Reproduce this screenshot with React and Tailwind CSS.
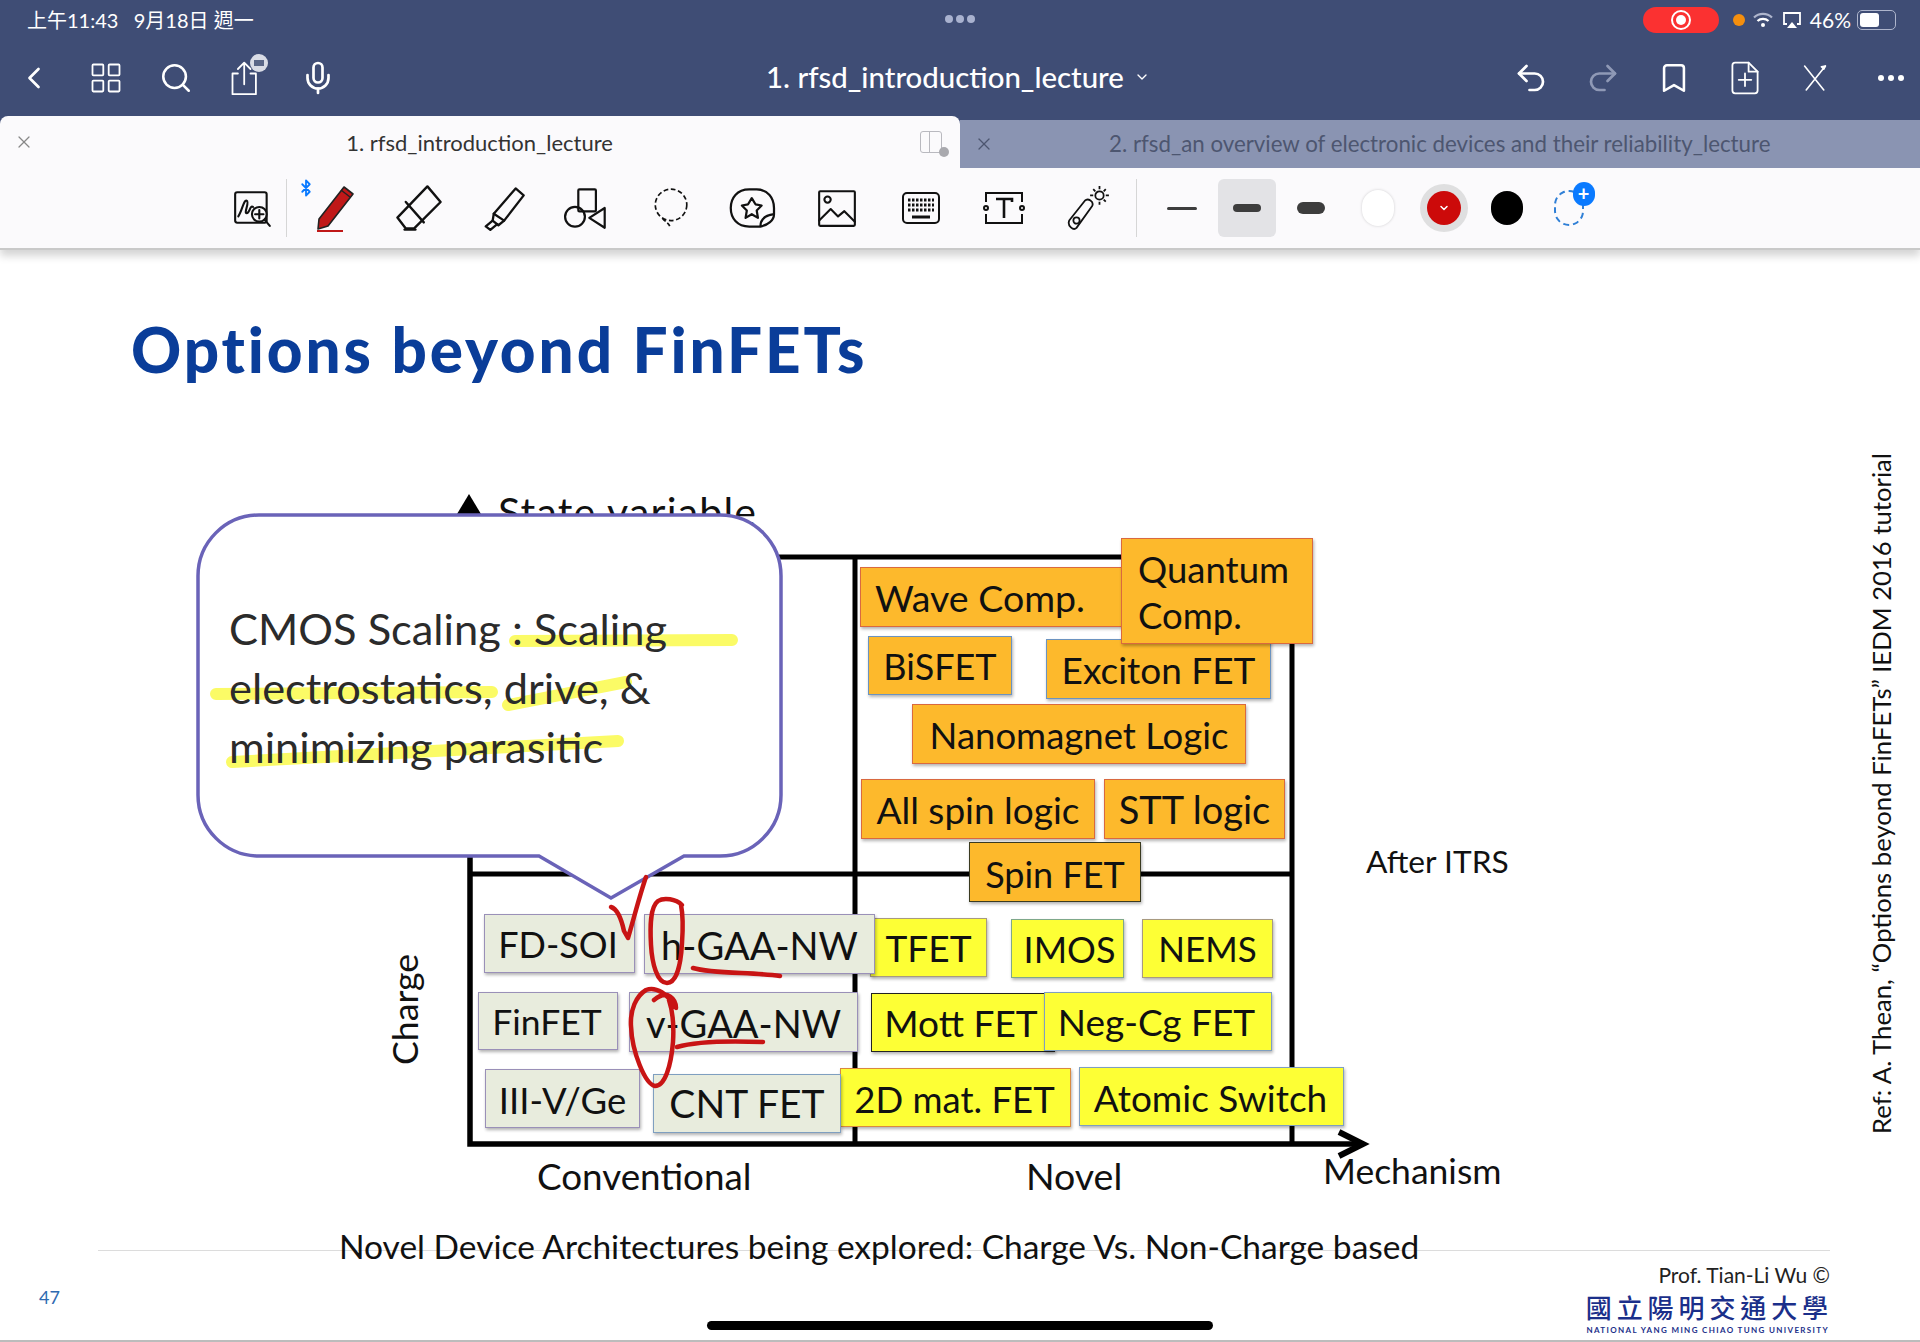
import { Bluetooth, ChevronDown, ChevronLeft, Search, Bookmark, Undo2, Redo2, Mic, X } from "lucide-react";

const SANS = "font-['Lato','Noto_Sans_CJK_TC',sans-serif]";

// boxes on the chart, page x / page y minus the canvas top (482)
const nodes = [
  ["Wave Comp.", "left-[860px] top-[87px] w-[270px] h-[60px] pr-[30px] pt-[3px] bg-[#fdb92c] border-[#d9693f] text-[37.5px]"],
  ["BiSFET", "left-[868px] top-[156px] w-[144px] h-[59px] bg-[#fdb92c] border-[#6b93c0] text-[36px]"],
  ["Exciton FET", "left-[1046px] top-[159px] w-[225px] h-[60px] pt-[1px] bg-[#fdb92c] border-[#6b93c0] text-[37px]"],
  ["Quantum Comp.", "left-[1121px] top-[58px] w-[192px] h-[106px] pl-[16px] pt-[2px] justify-start text-left leading-[46px] bg-[#fdb92c] border-[#d9693f] text-[36.5px]"],
  ["Nanomagnet Logic", "left-[912px] top-[224px] w-[334px] h-[60px] pt-[3px] bg-[#fdb92c] border-[#d9693f] text-[36.5px]"],
  ["All spin logic", "left-[861px] top-[299px] w-[234px] h-[60px] pt-[1px] bg-[#fdb92c] border-[#d9693f] text-[37px]"],
  ["STT logic", "left-[1104px] top-[299px] w-[181px] h-[60px] pt-[1px] bg-[#fdb92c] border-[#d9693f] text-[38px]"],
  ["Spin FET", "left-[969px] top-[362px] w-[172px] h-[60px] pt-[3px] bg-[#fdb92c] border-[#3a3a20] text-[36px]"],
  ["TFET", "left-[870px] top-[438px] w-[117px] h-[59px] bg-[#fdff35] border-[#a89a80] text-[37px]"],
  ["IMOS", "left-[1011px] top-[439px] w-[113px] h-[59px] pl-[4px] bg-[#fdff35] border-[#7fa88a] text-[36px]"],
  ["NEMS", "left-[1142px] top-[439px] w-[131px] h-[59px] bg-[#fdff35] border-[#a89a80] text-[35px]"],
  ["Mott FET", "left-[871px] top-[513px] w-[184px] h-[59px] pr-[4px] bg-[#fdff35] border-[#222222] text-[37px]"],
  ["Neg-Cg FET", "left-[1044px] top-[512px] w-[228px] h-[59px] pr-[3px] bg-[#fdff35] border-[#7f9fc0] text-[37px]"],
  ["2D mat. FET", "left-[840px] top-[588px] w-[231px] h-[59px] pt-[3px] pr-[2px] bg-[#fdff35] border-[#d9893f] text-[36.5px]"],
  ["Atomic Switch", "left-[1079px] top-[587px] w-[265px] h-[59px] pt-[3px] pr-[2px] bg-[#fdff35] border-[#7f9fc0] text-[37px]"],
  ["FD-SOI", "left-[484px] top-[434px] w-[151px] h-[59px] pr-[3px] bg-[#e8ecdd] border-[#9a90b8] text-[36px]"],
  ["h-GAA-NW", "left-[644px] top-[434px] w-[231px] h-[60px] pt-[2px] bg-[#e8ecdd] border-[#9a90b8] text-[38px]"],
  ["FinFET", "left-[478px] top-[512px] w-[140px] h-[58px] pt-[2px] pr-[2px] bg-[#e8ecdd] border-[#9a90b8] text-[35.5px]"],
  ["v-GAA-NW", "left-[629px] top-[512px] w-[229px] h-[60px] pt-[3px] bg-[#e8ecdd] border-[#9a90b8] text-[38px]"],
  ["III-V/Ge", "left-[485px] top-[589px] w-[155px] h-[59px] pt-[3px] bg-[#e8ecdd] border-[#9a90b8] text-[36.5px]"],
  ["CNT FET", "left-[653px] top-[594px] w-[188px] h-[59px] bg-[#e8ecdd] border-[#7f9fc0] text-[39px]"],
];

function Line({ className, children }) {
  return <svg viewBox="0 0 40 40" fill="none" stroke="currentColor" strokeWidth="2" strokeLinecap="round" strokeLinejoin="round" className={className}>{children}</svg>;
}

function StatusBar() {
  return (
    <div className="relative flex items-center h-[40px] pl-[27px] pr-[24px] text-white">
      <span className="text-[20px] whitespace-pre">上午11:43   9月18日 週一</span>
      <div className="absolute left-[945px] top-[15px] flex gap-[3px]">
        <i className="w-[8px] h-[8px] rounded-full bg-[#a9b2cf]" />
        <i className="w-[8px] h-[8px] rounded-full bg-[#a9b2cf]" />
        <i className="w-[8px] h-[8px] rounded-full bg-[#a9b2cf]" />
      </div>
      <div className="ml-auto flex items-center">
        <div className="w-[76px] h-[26px] rounded-full bg-[#fb3131] flex items-center justify-center mr-[14px]">
          <div className="w-[20px] h-[20px] rounded-full border-[2px] border-white flex items-center justify-center">
            <div className="w-[10px] h-[10px] rounded-full bg-white" />
          </div>
        </div>
        <div className="w-[12px] h-[12px] rounded-full bg-[#f58f0e] mr-[8px]" />
        <svg viewBox="0 0 20 16" className="w-[20px] h-[16px] mr-[9px]" fill="none" stroke="white" strokeWidth="2.2">
          <path d="M1 5.5a13 13 0 0 1 18 0" stroke="#aeb5cc" />
          <path d="M4.5 9a8 8 0 0 1 11 0" />
          <circle cx="10" cy="13" r="2" fill="white" stroke="none" />
        </svg>
        <svg viewBox="0 0 20 18" className="w-[20px] h-[18px] mr-[8px]" fill="none" stroke="white" strokeWidth="1.8">
          <path d="M5 13H2V2h16v11h-3" />
          <path d="M5 17l5-6 5 6z" fill="white" stroke="none" />
        </svg>
        <span className="text-[21px] mr-[6px]">46%</span>
        <div className="w-[39px] h-[20px] rounded-[5px] border border-[#aeb5cc] p-[2px]">
          <div className="w-[19px] h-full rounded-[3px] bg-white" />
        </div>
      </div>
    </div>
  );
}

function NavBar() {
  return (
    <div className="relative flex items-center h-[76px] text-white">
      <ChevronLeft className="ml-[16px] w-[36px] h-[36px]" strokeWidth={1.8} />
      <Line className="ml-[36px] w-[36px] h-[36px]">
        <rect x="5" y="5" width="12" height="12" rx="1" /><rect x="23" y="5" width="12" height="12" rx="1" />
        <rect x="5" y="23" width="12" height="12" rx="1" /><rect x="23" y="23" width="12" height="12" rx="1" />
      </Line>
      <Search className="ml-[35px] w-[34px] h-[34px]" strokeWidth={1.8} />
      <div className="relative ml-[35px] w-[36px] h-[40px]">
        <Line className="w-[36px] h-[40px]">
          <path d="M11 15H5v23h26V15h-6" /><path d="M18 27V3M11 10l7-7 7 7" />
        </Line>
        <div className="absolute left-[22px] -top-[4px] w-[18px] h-[18px] rounded-full bg-[#d9dce6] flex items-center justify-center">
          <div className="w-[10px] h-[6px] bg-[#5a6687]" />
        </div>
      </div>
      <Mic className="ml-[36px] w-[36px] h-[38px]" strokeWidth={1.8} />
      <div className="absolute left-[766px] top-[18px] flex items-center text-[29.4px] font-medium leading-[38px]">
        1. rfsd_introduction_lecture
        <ChevronDown className="ml-[10px] w-[16px] h-[16px]" strokeWidth={2} />
      </div>
      <div className="ml-auto mr-[16px] flex items-center gap-[36px]">
        <Undo2 className="w-[36px] h-[36px]" strokeWidth={1.8} />
        <Redo2 className="w-[36px] h-[36px] text-[#8f99b6]" strokeWidth={1.8} />
        <Bookmark className="w-[34px] h-[40px]" strokeWidth={1.8} />
        <Line className="w-[36px] h-[42px]">
          <path d="M24 3H9a3 3 0 0 0-3 3v28a3 3 0 0 0 3 3h22a3 3 0 0 0 3-3V13z" /><path d="M24 3v10h10M20 15v14M13 22h14" />
        </Line>
        <Line className="w-[32px] h-[36px]">
          <path d="M7 5l24 30M33 5L9 35" /><path d="M33 5l-5 1 3 3z" fill="currentColor" />
        </Line>
        <div className="flex gap-[4px] ml-[11px]">
          <i className="w-[6px] h-[6px] rounded-full bg-white" />
          <i className="w-[6px] h-[6px] rounded-full bg-white" />
          <i className="w-[6px] h-[6px] rounded-full bg-white" />
        </div>
      </div>
    </div>
  );
}

function Tabs() {
  return (
    <div className="flex items-end h-[52px]">
      <div className="relative w-[960px] h-[52px] rounded-t-[8px] bg-[#fbfafc] flex items-center justify-center text-[22px] text-[#333]">
        <X className="absolute left-[14px] top-[16px] w-[20px] h-[20px] text-[#888]" strokeWidth={1.5} />
        <span className="-ml-[1px]">1. rfsd_introduction_lecture</span>
        <div className="absolute left-[920px] top-[15px] w-[22px] h-[22px] rounded-[3px] border border-[#b9b9bf] border-l-[#b9b9bf]">
          <div className="w-[9px] h-full border-r border-[#b9b9bf]" />
          <div className="absolute left-[18px] top-[15px] w-[10px] h-[10px] rounded-full bg-[#a9a9ae]" />
        </div>
      </div>
      <div className="relative w-[960px] h-[48px] bg-[#8a94b2] flex items-center pl-[149px] text-[22.3px] text-[#4d5670]">
        <X className="absolute left-[14px] top-[14px] w-[20px] h-[20px] text-[#4d5670]" strokeWidth={1.5} />
        2. rfsd_an overview of electronic devices and their reliability_lecture
      </div>
    </div>
  );
}

function Tool({ children }) {
  return <div className="relative w-[83.6px] flex justify-center text-[#111]">{children}</div>;
}

function Toolbar() {
  return (
    <div className="flex items-center h-[82px] pl-[211px] bg-[#fbfafc] border-b-2 border-[#c9c9c9] shadow-[0_6px_8px_rgba(0,0,0,0.17)]">
      <Tool>
        <Line className="w-[42px] h-[42px]">
          <rect x="3" y="5" width="30" height="29" rx="2" /><path d="M6 28c4-6 5-16 8-15s-3 12 0 12 3-8 6-6" />
          <circle cx="26" cy="26" r="7" fill="#fbfafc" /><path d="M26 22v8M22 26h8M31 31l5 6" />
        </Line>
      </Tool>
      <div className="w-px h-[58px] bg-[#d6d6d6] -ml-[9px] mr-[7px]" />
      <Tool>
        <Bluetooth className="absolute left-[3px] -top-[7px] w-[18px] h-[22px] text-[#0a7aff]" strokeWidth={2.4} />
        <svg viewBox="0 0 48 48" className="w-[48px] h-[48px]">
          <path d="M8 35L33 3l9 7-25 32-10 3z" fill="#c01818" stroke="#222" strokeWidth="1.6" strokeLinejoin="round" />
          <path d="M6 47h26" stroke="#c01818" strokeWidth="2" />
          <path d="M30 6l9 7" fill="none" stroke="#222" strokeWidth="1.5" />
        </svg>
      </Tool>
      <Tool>
        <Line className="w-[48px] h-[48px]">
          <path d="M27 2l11 13-22 22H9l-7-9z" /><path d="M9 15l15 17" /><path d="M8 38h9" />
        </Line>
      </Tool>
      <Tool>
        <Line className="w-[46px] h-[46px]">
          <path d="M31 3l7 6-17 22-9-6z" /><path d="M12 25l-1 6 5 4 5-4" /><path d="M11 31l-6 5 4 3 6-5" />
        </Line>
      </Tool>
      <Tool>
        <Line className="w-[44px] h-[46px]">
          <rect x="13" y="3" width="16" height="20" rx="1" /><circle cx="10" cy="28" r="9" /><path d="M37 20v18l-14-9z" />
        </Line>
      </Tool>
      <Tool>
        <svg viewBox="0 0 40 40" className="w-[42px] h-[46px]" fill="none" stroke="#111" strokeWidth="1.6">
          <circle cx="21" cy="17" r="15" strokeDasharray="4.5 2.5" /><path d="M13 30c2 3 6 4 7 8" strokeDasharray="4 2" />
        </svg>
      </Tool>
      <Tool>
        <svg viewBox="2 3 38 34" fill="none" stroke="#111" strokeWidth="1.8" strokeLinejoin="round" className="w-[48px] h-[42px]">
          <path d="M27 35H18C8 35 3 28 3 20S8 5 18 5h6c9 0 14 7 14 15v5c0 5-5 9-11 10z" />
          <path d="M20 12l3 5 5 1-4 4 1 6-5-3-5 3 1-6-4-4 5-1z" /><path d="M27 35c0-5 3-9 11-10" />
        </svg>
      </Tool>
      <Tool>
        <Line className="w-[42px] h-[42px]">
          <rect x="3" y="4" width="34" height="33" rx="1" /><circle cx="11" cy="12" r="3" /><path d="M3 32l11-11 7 7 6-5 10 10" />
        </Line>
      </Tool>
      <Tool>
        <svg viewBox="0 0 40 34" className="w-[40px] h-[34px]" fill="none" stroke="#111" strokeWidth="2">
          <rect x="2" y="2" width="36" height="30" rx="4" />
          <path d="M7 9h26M7 14h26" strokeDasharray="2.5 1.5" strokeWidth="3" />
          <path d="M7 19h26" strokeDasharray="2.5 1.5" strokeWidth="3" />
          <path d="M11 26h18" strokeWidth="3" />
        </svg>
      </Tool>
      <Tool>
        <svg viewBox="0 0 42 36" className="w-[42px] h-[36px]" fill="none" stroke="#111" strokeWidth="2">
          <path d="M3 12V3h36v9M3 24v9h36v-9" /><circle cx="3" cy="18" r="2" /><circle cx="39" cy="18" r="2" />
          <path d="M13 9h16v3M21 9v19" strokeWidth="2.6" />
        </svg>
      </Tool>
      <Tool>
        <svg viewBox="0 0 44 44" className="w-[46px] h-[46px]" fill="none" stroke="#111" strokeWidth="1.7" strokeLinejoin="round">
          <path d="M4 34l15-19c3-3 9 1 7 5L11 41c-3 3-9-2-7-7z" /><circle cx="11" cy="34" r="3" />
          <circle cx="33" cy="10" r="4" /><path d="M33 1v3M33 16v3M24 10h3M39 10h3M27 4l2 2M37 14l2 2M39 4l-2 2" />
        </svg>
      </Tool>
      <div className="w-px h-[58px] bg-[#d6d6d6] ml-[6px] mr-[30px]" />
      <div className="flex items-center w-[30px] h-[3px] rounded-full bg-[#3d3d3d]" />
      <div className="ml-[21px] w-[58px] h-[58px] rounded-[6px] bg-[#e3e3e6] flex items-center justify-center">
        <div className="w-[28px] h-[8px] rounded-full bg-[#3d3d3d]" />
      </div>
      <div className="ml-[21px] w-[28px] h-[12px] rounded-[6px] bg-[#3d3d3d]" />
      <div className="ml-[37px] w-[32px] h-[36px] rounded-full bg-white shadow-[0_0_3px_rgba(0,0,0,0.18)]" />
      <div className="ml-[26px] w-[48px] h-[48px] rounded-full bg-[#dfdfe0] flex items-center justify-center">
        <div className="w-[34px] h-[34px] rounded-full bg-[#cc0a0a] flex items-center justify-center">
          <ChevronDown className="w-[12px] h-[12px] text-white" strokeWidth={3} />
        </div>
      </div>
      <div className="ml-[23px] w-[32px] h-[34px] rounded-full bg-black" />
      <div className="relative ml-[31px] w-[30px] h-[36px]">
        <div className="w-[30px] h-[36px] rounded-full border-2 border-dashed border-[#2f7fd6]" />
        <div className="absolute left-[19px] -top-[8px] w-[22px] h-[24px] rounded-full bg-[#0a7aff] text-white text-[20px] leading-[23px] font-bold text-center">+</div>
      </div>
    </div>
  );
}

function ChartLines() {
  return (
    <svg viewBox="0 480 1920 770" className="absolute inset-0 w-[1920px] h-[770px]" fill="none" stroke="#000">
      <path d="M470 510V1144H1358" strokeWidth="5.5" />
      <path d="M470 557H1292V1144M855 557V1144M470 874H1292" strokeWidth="5" />
      <path d="M457 514l12-20 12 20z" fill="#000" stroke="none" />
      <path d="M1339 1132l24 12-24 12" strokeWidth="6" />
    </svg>
  );
}

function Callout() {
  return (
    <svg viewBox="0 480 1920 770" className="absolute inset-0 w-[1920px] h-[770px]">
      <path d="M259 515H720a61 61 0 0 1 61 61V795a61 61 0 0 1-61 61H684L611 898 539 856H259a61 61 0 0 1-61-61V576a61 61 0 0 1 61-61z" fill="#fff" stroke="#6a63b8" strokeWidth="3.5" />
      <g fill="none" stroke="#fbfb66" strokeWidth="12" strokeLinecap="round">
        <path d="M515 641L732 640" />
        <path d="M216 694L492 692" />
        <path d="M508 705L626 682" />
        <path d="M232 762L618 741" />
      </g>
    </svg>
  );
}

function RedInk() {
  return (
    <svg viewBox="0 480 1920 770" className="absolute inset-0 w-[1920px] h-[770px]" fill="none" stroke="#c81414" strokeWidth="4.5" strokeLinecap="round" strokeLinejoin="round">
      <path d="M611 907c6 2 10 10 13 24l4 7c6-20 12-44 18-61" />
      <path d="M682 905c-6-6-18-8-24-4-8 6-8 26-7 44 1 18 6 38 16 38 10 0 14-20 15-40 1-14 1-28-1-38" />
      <path d="M654 1000c14-12 22 0 22 8-8-14-20-22-30-18-10 6-16 20-15 36 1 26 14 58 24 60 10 0 16-20 18-44 1-16 0-30-4-42" />
      <path d="M693 968c20 6 60 4 87 8" />
      <path d="M677 1047c20-6 60-6 86-5" />
    </svg>
  );
}

function Chart() {
  return (
    <div className="relative h-[770px] text-[#111]">
      <ChartLines />
      <span className="absolute left-[498px] top-[9px] text-[41px] leading-[46px] tracking-[1.2px] whitespace-nowrap">State variable</span>
      <Callout />
      <div className="absolute left-[229px] top-[119px] text-[43.4px] leading-[59px] text-[#2b2b2b] whitespace-nowrap">
        <p>CMOS Scaling : Scaling</p>
        <p>electrostatics, drive, &amp;</p>
        <p>minimizing parasitic</p>
      </div>
      {nodes.map(([label, cls]) => (
        <div key={label} className={`absolute flex items-center justify-center border shadow-[1px_2px_3px_rgba(0,0,0,0.3)] ${cls}`}>
          {label}
        </div>
      ))}
      <RedInk />
      <span className="absolute left-[355px] top-[512px] w-[100px] text-center -rotate-90 text-[35.7px] leading-[46px]">Charge</span>
      <span className="absolute left-[537px] top-[673px] text-[36.8px] leading-[46px]">Conventional</span>
      <span className="absolute left-[1026px] top-[673px] text-[37.5px] leading-[46px]">Novel</span>
      <span className="absolute left-[1323px] top-[668px] text-[35.5px] leading-[46px]">Mechanism</span>
      <span className="absolute left-[1366px] top-[358px] text-[31.7px] leading-[46px]">After ITRS</span>
      <span className="absolute left-[339px] top-[744px] text-[33.5px] leading-[44px] whitespace-nowrap">Novel Device Architectures being explored: Charge Vs. Non-Charge based</span>
      <span className="absolute left-[1541px] top-[298px] w-[680px] text-center -rotate-90 text-[25.7px] leading-[32px] whitespace-nowrap">Ref: A. Thean, “Options beyond FinFETs” IEDM 2016 tutorial</span>
    </div>
  );
}

function Footer() {
  return (
    <div className="mx-[98px] mr-[90px] border-t border-[#dcdcdc] flex justify-between">
      <span className="mt-[33px] -ml-[59px] text-[18px] text-[#2f6ab0]">47</span>
      <div className="flex flex-col items-end pt-[11px]">
        <span className="text-[21px] leading-[26px] text-[#222]">Prof. Tian-Li Wu ©</span>
        <span className="mt-[5px] text-[26px] leading-[30px] font-medium tracking-[4.9px] mr-[-3px] text-[#1b2f8a]">國立陽明交通大學</span>
        <span className="mt-[1px] mr-[1px] text-[8px] leading-[12px] font-bold tracking-[1.35px] text-[#1b2f8a]">NATIONAL YANG MING CHIAO TUNG UNIVERSITY</span>
      </div>
    </div>
  );
}

export default function App() {
  return (
    <div className={`relative w-[1920px] h-[1342px] overflow-hidden bg-white ${SANS}`}>
      <div className="bg-[#3f4d75]">
        <StatusBar />
        <NavBar />
        <Tabs />
      </div>
      <Toolbar />
      <h1 className="h-[230px] pl-[131px] pt-[61px] text-[62px] leading-[76px] font-black tracking-[2.9px] text-[#0a3d99]">Options beyond FinFETs</h1>
      <Chart />
      <Footer />
      <div className="absolute left-[707px] top-[1321px] w-[506px] h-[9px] rounded-full bg-black" />
      <div className="absolute left-0 bottom-0 w-full h-[2px] bg-[#bcbcbc]" />
    </div>
  );
}
